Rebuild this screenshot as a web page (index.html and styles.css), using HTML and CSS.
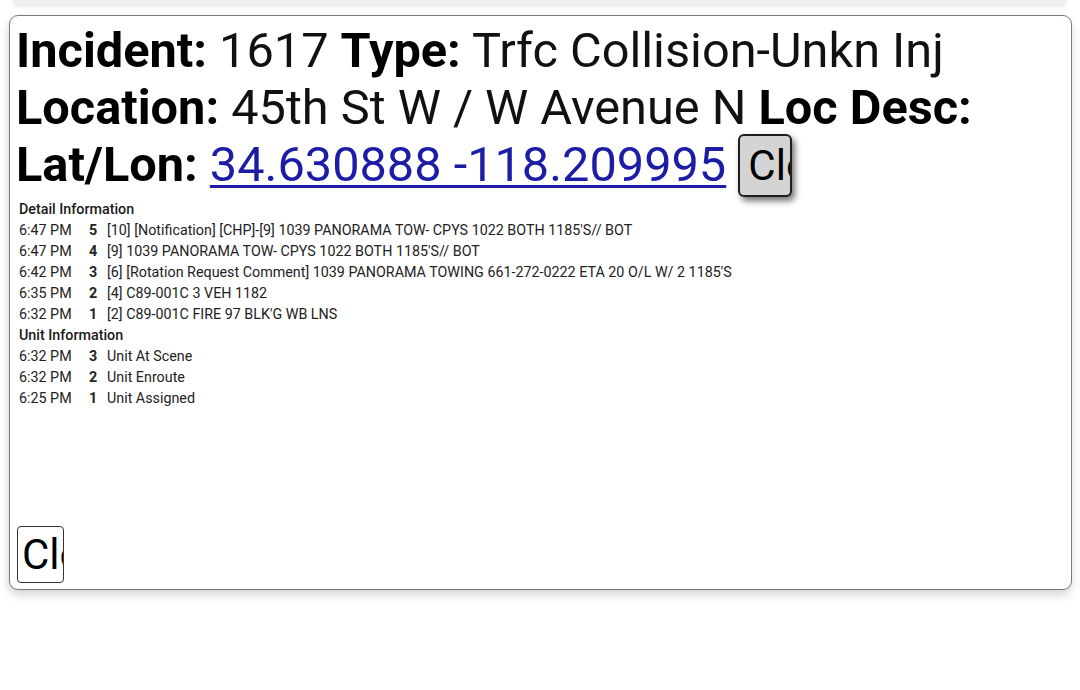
FILE: index.html
```html
<!DOCTYPE html>
<html>
<head>
<meta charset="utf-8">
<link rel="stylesheet" href="styles.css">
</head>
<body>
<div class="prev-card"></div>
<div class="card">
  <div class="header">
    <div class="hline"><b>Incident:</b> 1617 <b>Type:</b> Trfc Collision-Unkn Inj</div>
    <div class="hline"><b>Location:</b> 45th St W / W Avenue N <b>Loc Desc:</b></div>
    <div class="hline"><b>Lat/Lon:</b> <a href="#" class="coords">34.630888 -118.209995</a> <button class="btn btn-map">Close</button></div>
  </div>
  <div class="details">
    <div class="sec-title">Detail Information</div>
    <div class="rows">
      <span class="t">6:47 PM</span><span class="n">5</span><span class="d">[10] [Notification] [CHP]-[9] 1039 PANORAMA TOW- CPYS 1022 BOTH 1185'S// BOT</span>
      <span class="t">6:47 PM</span><span class="n">4</span><span class="d">[9] 1039 PANORAMA TOW- CPYS 1022 BOTH 1185'S// BOT</span>
      <span class="t">6:42 PM</span><span class="n">3</span><span class="d">[6] [Rotation Request Comment] 1039 PANORAMA TOWING 661-272-0222 ETA 20 O/L W/ 2 1185'S</span>
      <span class="t">6:35 PM</span><span class="n">2</span><span class="d">[4] C89-001C 3 VEH 1182</span>
      <span class="t">6:32 PM</span><span class="n">1</span><span class="d">[2] C89-001C FIRE 97 BLK'G WB LNS</span>
    </div>
    <div class="sec-title">Unit Information</div>
    <div class="rows">
      <span class="t">6:32 PM</span><span class="n">3</span><span class="d">Unit At Scene</span>
      <span class="t">6:32 PM</span><span class="n">2</span><span class="d">Unit Enroute</span>
      <span class="t">6:25 PM</span><span class="n">1</span><span class="d">Unit Assigned</span>
    </div>
  </div>
  <div class="footer">
    <button class="btn btn-close">Close</button>
  </div>
</div>
</body>
</html>
```

FILE: styles.css
```css
html, body {
  margin: 0;
  padding: 0;
  background: #fff;
}
body {
  font-family: Roboto, "Liberation Sans", sans-serif;
  color: #000;
  width: 1080px;
  height: 690px;
  overflow: hidden;
}
.prev-card {
  height: 4px;
  margin: 0 14px 0 13px;
  background: #efefef;
  border-radius: 0 0 8px 8px;
  box-shadow: 0 2px 5px rgba(0,0,0,0.14);
}
.card {
  margin: 11px 8px 0 9px;
  border: 1px solid #7b7b7b;
  border-radius: 9px;
  box-shadow: 0 6px 10px rgba(0,0,0,0.12), -2px 2px 6px rgba(0,0,0,0.06);
  padding: 6px 7px 6px 6px;
  background: #fff;
}
.header {
  font-size: 48.7px;
  line-height: 57px;
  color: #111;
}
.hline {
  white-space: nowrap;
  height: 57px;
}
.header b {
  font-weight: 700;
  color: #000;
}
.coords {
  color: #1c1ca6;
  text-decoration: underline;
  text-decoration-thickness: 3px;
  text-underline-offset: 4px;
}
.btn {
  font-family: Roboto, "Liberation Sans", sans-serif;
  font-size: 42px;
  white-space: nowrap;
  overflow: hidden;
  text-align: left;
  color: #000;
  cursor: pointer;
}
.btn-map {
  width: 54px;
  height: 63px;
  padding: 0 0 0 8px;
  background: #d4d4d4;
  border: 2px solid #1e1e1e;
  border-radius: 6px;
  box-shadow: 3px 4px 6px rgba(0,0,0,0.55);
  vertical-align: top;
  margin-top: -2px;
  line-height: 56px;
}
.details {
  margin-top: 6px;
  padding-left: 3px;
  height: 327px;
  font-size: 14.3px;
  line-height: 21px;
  color: #222;
}
.sec-title {
  font-weight: 500;
  color: #1a1a1a;
}
.rows {
  display: grid;
  grid-template-columns: 70px 18px auto;
}
.rows .n {
  font-weight: 700;
}
.footer {
  display: flex;
  padding-left: 1px;
}
.btn-close {
  width: 47px;
  height: 57px;
  padding: 0 0 0 4px;
  background: #fff;
  border: 1px solid #333;
  border-radius: 4px;
  line-height: 55px;
}
```
